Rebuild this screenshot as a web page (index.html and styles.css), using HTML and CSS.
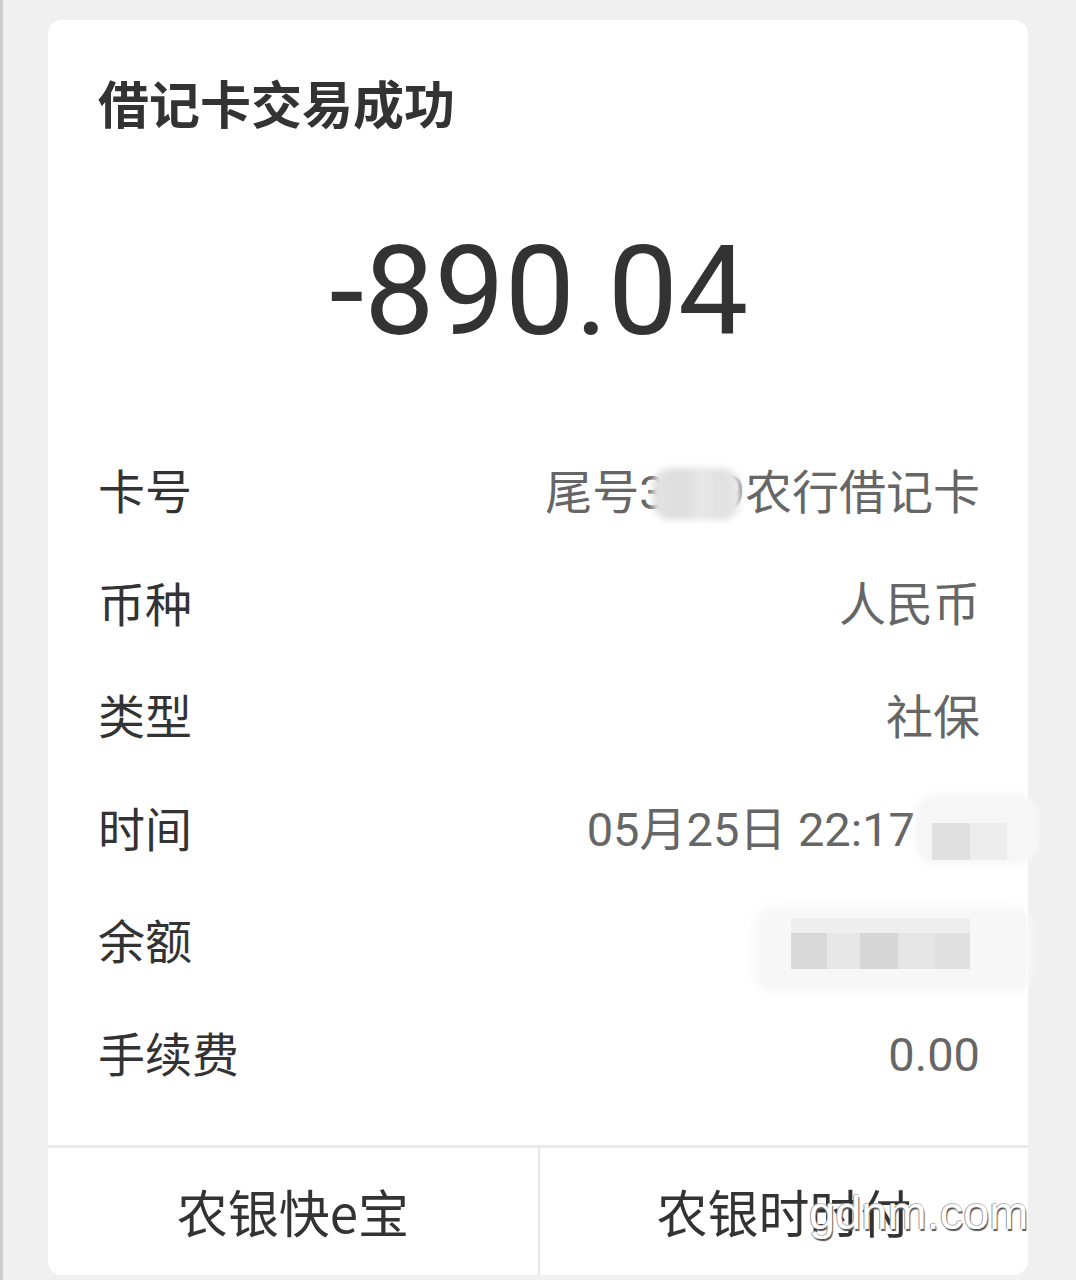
FILE: index.html
```html
<!DOCTYPE html>
<html lang="zh-CN">
<head>
<meta charset="utf-8">
<title>借记卡交易成功</title>
<link rel="stylesheet" href="styles.css">
</head>
<body>
<div class="screen">
  <div class="card">
    <h1 class="title">借记卡交易成功</h1>
    <div class="amount">-890.04</div>
    <div class="rows">
      <div class="row">
        <span class="label">卡号</span>
        <span class="value">尾号3<span class="mask mask-card"><span class="blot"></span></span>9农行借记卡</span>
      </div>
      <div class="row">
        <span class="label">币种</span>
        <span class="value">人民币</span>
      </div>
      <div class="row">
        <span class="label">类型</span>
        <span class="value">社保</span>
      </div>
      <div class="row">
        <span class="label">时间</span>
        <span class="value">05月25日 22:17<span class="mask mask-time"><span class="halo"></span><span class="sq sq-t1"></span><span class="sq sq-t2"></span></span></span>
      </div>
      <div class="row">
        <span class="label">余额</span>
        <span class="value"><span class="mask mask-balance"><span class="halo"></span><span class="strip"></span><span class="cells"><i class="c1"></i><i class="c2"></i><i class="c3"></i><i class="c4"></i><i class="c5"></i></span></span></span>
      </div>
      <div class="row">
        <span class="label">手续费</span>
        <span class="value">0.00</span>
      </div>
    </div>
    <div class="actions">
      <div class="action">农银快e宝</div>
      <div class="action action-right">农银时时付</div>
    </div>
  </div>
  <div class="watermark">gdnm.com</div>
</div>
</body>
</html>
```
FILE: styles.css
```css
html, body {
  margin: 0;
  padding: 0;
}
body {
  background: #f0f0f0;
  font-family: Roboto, "Noto Sans CJK SC", sans-serif;
  color: #333;
}
.screen {
  position: relative;
  height: 1280px;
  border-left: 3px solid #cdcdcd;
  box-sizing: border-box;
  padding: 20px 0 0 45px;
  overflow: hidden;
}
.card {
  width: 980px;
  height: 1255px;
  background: #fff;
  border-radius: 14px;
  box-sizing: border-box;
  padding-top: 45px;
  display: flex;
  flex-direction: column;
}
.title {
  margin: 0;
  padding: 0 50px;
  font-family: "Noto Sans CJK SC", sans-serif;
  font-weight: 700;
  font-size: 51px;
  line-height: 75px;
  color: #333;
}
.amount {
  margin-top: 77px;
  text-align: center;
  font-family: Roboto, sans-serif;
  font-size: 125px;
  line-height: 150px;
  color: #333;
  padding-left: 2px;
}
.rows {
  margin-top: 66px;
  padding: 0 48px 0 50px;
}
.row {
  display: flex;
  justify-content: space-between;
  align-items: center;
  height: 112.6px;
  font-size: 47px;
  line-height: 112.6px;
}
.label {
  color: #333;
  font-family: "Noto Sans CJK SC", sans-serif;
}
.value {
  color: #666;
  display: inline-flex;
  align-items: center;
  white-space: nowrap;
  padding-top: 7px;
}
.mask {
  position: relative;
  display: inline-block;
}
.mask-card {
  width: 53px;
  height: 50px;
}
.mask-card .blot {
  position: absolute;
  left: -14px;
  right: -22px;
  top: 0;
  bottom: -2px;
  background: linear-gradient(90deg, #e4e4e4 0%, #dcdcdc 35%, #e8e8e8 55%, #e0e0e0 80%, #ececec 100%);
  border-radius: 18px;
  filter: blur(3px);
}
.mask-time {
  width: 65px;
  height: 50px;
}
.mask-time .halo {
  position: absolute;
  left: 0;
  top: -12px;
  width: 124px;
  height: 70px;
  background: #f6f6f6;
  border-radius: 22px;
  filter: blur(3px);
}
.mask-time .sq {
  position: absolute;
  top: 17px;
  height: 37px;
}
.mask-time .sq-t1 {
  left: 17px;
  width: 38px;
  background: #e0e0e0;
}
.mask-time .sq-t2 {
  left: 55px;
  width: 37px;
  background: #ededed;
}
.mask-balance {
  width: 179px;
  height: 51px;
  margin-right: 10px;
}
.mask-balance .halo {
  position: absolute;
  left: -37px;
  right: -62px;
  top: -12px;
  bottom: -24px;
  background: #f7f7f7;
  border-radius: 20px;
  filter: blur(4px);
}
.mask-balance .strip {
  position: absolute;
  left: 0;
  right: 0;
  top: 0;
  height: 15px;
  background: #eeeeee;
}
.mask-balance .cells {
  position: absolute;
  left: 0;
  right: 0;
  bottom: 0;
  height: 36px;
  display: flex;
}
.mask-balance .cells i {
  display: block;
  height: 100%;
}
.mask-balance .c1 { width: 36px; background: #d9d9d9; }
.mask-balance .c2 { width: 33px; background: #e7e7e7; }
.mask-balance .c3 { width: 38px; background: #d6d6d6; }
.mask-balance .c4 { width: 37px; background: #e5e5e5; }
.mask-balance .c5 { width: 35px; background: #e0e0e0; }
.actions {
  margin-top: auto;
  height: 130px;
  border-top: 3px solid #e9e9e9;
  box-sizing: border-box;
  display: grid;
  grid-template-columns: 490px 1fr;
}
.action {
  text-align: center;
  font-family: "Noto Sans CJK SC", sans-serif;
  font-size: 51px;
  line-height: 127px;
  color: #333;
}
.action-right {
  border-left: 2px solid #e6e6e6;
}
.watermark {
  position: absolute;
  left: 806px;
  top: 1183px;
  font-family: "Liberation Sans", sans-serif;
  font-size: 47px;
  line-height: 60px;
  color: #fff;
  text-shadow: -1px 0 0 #999, 1px 2px 1px #555, 0 -1px 0 #bbb;
}
```
